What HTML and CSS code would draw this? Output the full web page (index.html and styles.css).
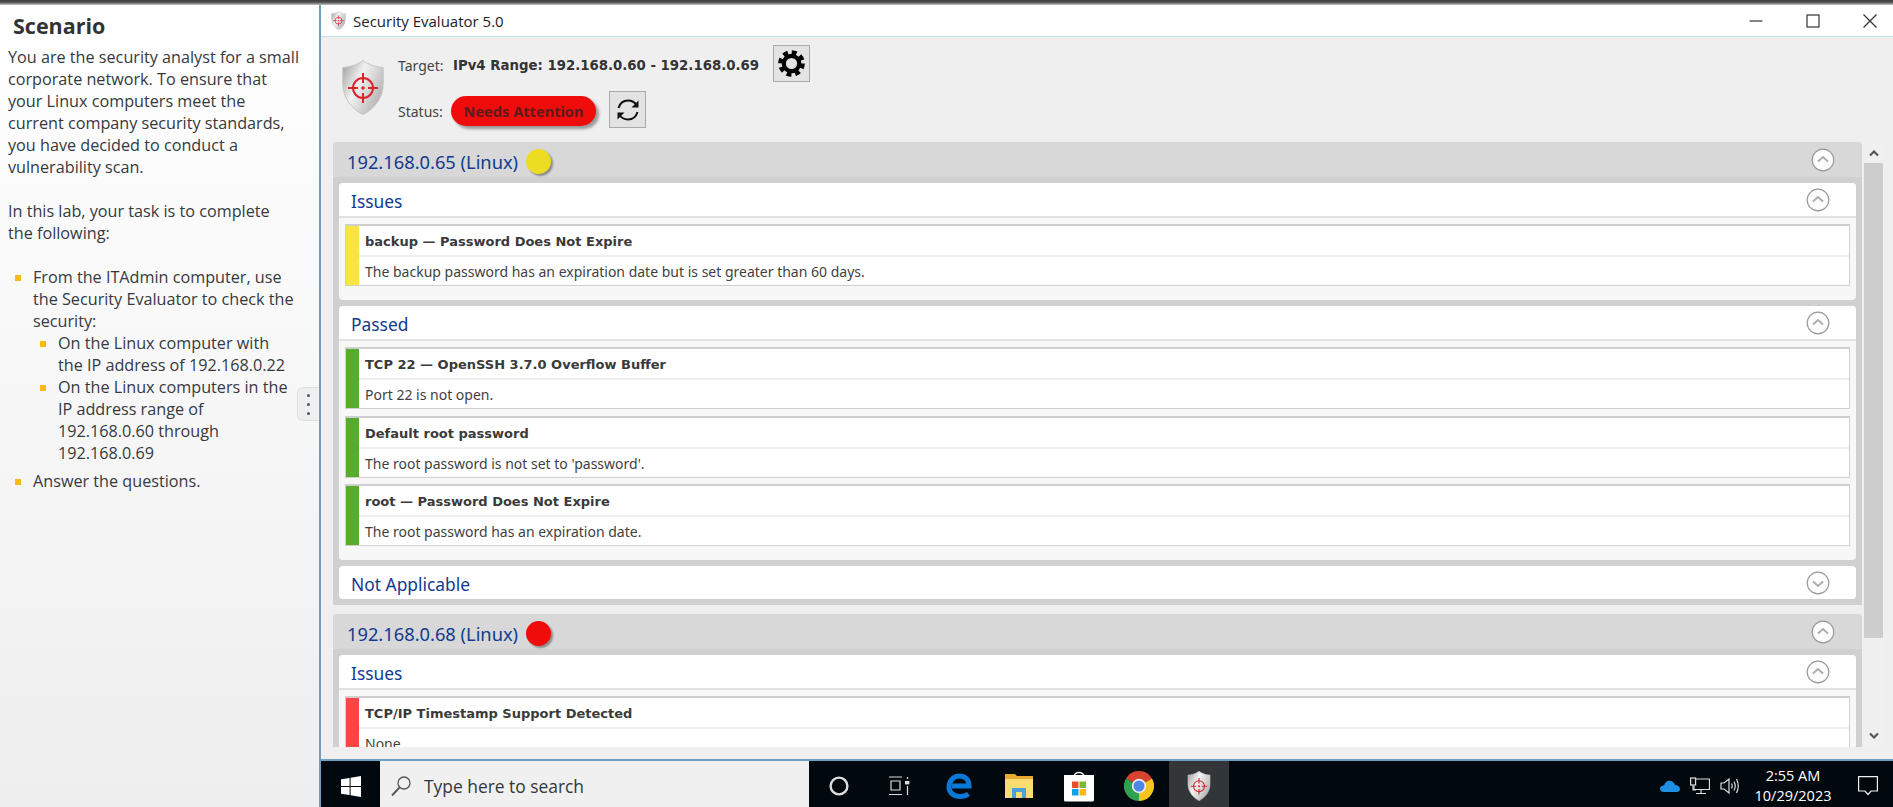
FILE: index.html
```html
<!DOCTYPE html>
<html lang="en">
<head>
<meta charset="utf-8">
<title>Security Evaluator 5.0</title>
<link rel="stylesheet" href="styles.css">
</head>
<body>
<svg class="defs" width="0" height="0" aria-hidden="true">
  <defs>
    <linearGradient id="silver" x1="0" y1="0" x2="1" y2="0.6">
      <stop offset="0" stop-color="#9b9b9b"/>
      <stop offset="0.45" stop-color="#f2f2f2"/>
      <stop offset="1" stop-color="#b5b5b5"/>
    </linearGradient>
    <symbol id="shield" viewBox="0 0 42 55">
      <path d="M21 0.5C15 5 8 7 0.8 7.5V24C0.8 38 10 49 21 54.5C32 49 41.2 38 41.2 24V7.5C34 7 27 5 21 0.5Z" fill="url(#silver)" stroke="#c4c4c4"/>
      <g fill="none" stroke="#d8262c" stroke-width="2">
        <circle cx="21" cy="28" r="10"/>
        <path d="M21 13V23M21 33V43M6 28H16M26 28H36"/>
      </g>
      <circle cx="21" cy="28" r="1.8" fill="#d8262c"/>
    </symbol>
    <symbol id="chev-up" viewBox="0 0 24 24">
      <circle cx="12" cy="12" r="10.8" fill="#fdfdfd" stroke="#9a9a9a" stroke-width="1.2"/>
      <path d="M7 13.5L12 9L17 13.5" fill="none" stroke="#adadad" stroke-width="2"/>
    </symbol>
    <symbol id="chev-down" viewBox="0 0 24 24">
      <circle cx="12" cy="12" r="10.8" fill="#fdfdfd" stroke="#9a9a9a" stroke-width="1.2"/>
      <path d="M7 10.5L12 15L17 10.5" fill="none" stroke="#adadad" stroke-width="2"/>
    </symbol>
  </defs>
</svg>

<div class="topstrip"></div>
<div class="screen">
  <aside class="sidebar">
    <h1 class="scenario-title">Scenario</h1>
    <p class="para">You are the security analyst for a small corporate network. To ensure that your Linux computers meet the current company security standards, you have decided to conduct a vulnerability scan.</p>
    <p class="para">In this lab, your task is to complete<br>the following:</p>
    <ul class="tasks">
      <li>From the ITAdmin computer, use the Security Evaluator to check the security:
        <ul class="subtasks">
          <li>On the Linux computer with<br>the IP address of 192.168.0.22</li>
          <li>On the Linux computers in the<br>IP address range of<br>192.168.0.60 through<br>192.168.0.69</li>
        </ul>
      </li>
      <li>Answer the questions.</li>
    </ul>
    <div class="handle"><span></span><span></span><span></span></div>
  </aside>

  <div class="desktop">
    <main class="window">
      <div class="titlebar">
        <svg class="title-icon"><use href="#shield"/></svg>
        <span class="title-text">Security Evaluator 5.0</span>
        <div class="controls">
          <svg class="ctl" viewBox="0 0 14 14"><path d="M0.5 7H13.5" stroke="#333" stroke-width="1.2" fill="none"/></svg>
          <svg class="ctl" viewBox="0 0 14 14"><rect x="1" y="1" width="12" height="12" fill="none" stroke="#333" stroke-width="1.2"/></svg>
          <svg class="ctl" viewBox="0 0 14 14"><path d="M0.5 0.5L13.5 13.5M13.5 0.5L0.5 13.5" stroke="#333" stroke-width="1.2" fill="none"/></svg>
        </div>
      </div>

      <header class="appbar">
        <svg class="app-shield"><use href="#shield"/></svg>
        <div class="app-rows">
          <div class="app-row">
            <span class="app-label app-label-target">Target:</span>
            <strong class="target">IPv4 Range: 192.168.0.60 - 192.168.0.69</strong>
            <button class="tool gear" type="button" aria-label="Settings">
              <svg viewBox="0 0 30 30" width="29" height="29">
                <circle cx="15" cy="15" r="8" fill="none" stroke="#000" stroke-width="4.4"/>
                <circle cx="15" cy="15" r="11.6" fill="none" stroke="#000" stroke-width="4.4" stroke-dasharray="5.1 4"/>
              </svg>
            </button>
          </div>
          <div class="app-row">
            <span class="app-label app-label-status">Status:</span>
            <span class="pill">Needs Attention</span>
            <button class="tool refresh" type="button" aria-label="Refresh">
              <svg viewBox="0 0 24 24" width="24" height="24" fill="none" stroke="#111" stroke-width="2">
                <path d="M2.5 10C4 5 8 2.5 12 2.5C16 2.5 19 4.5 21 7.5"/>
                <path d="M21.5 14C20 19 16 21.5 12 21.5C8 21.5 5 19.5 3 16.5"/>
                <path d="M22.5 2.5V9.5H15.5Z" fill="#111" stroke="none"/>
                <path d="M1.5 21.5V14.5H8.5Z" fill="#111" stroke="none"/>
              </svg>
            </button>
          </div>
        </div>
      </header>

      <div class="pane">
        <div class="list">
          <section class="group">
            <div class="group-head">
              <span class="host">192.168.0.65 (Linux)</span>
              <span class="dot dot-yellow"></span>
              <svg class="chev"><use href="#chev-up"/></svg>
            </div>
            <div class="group-body">
              <section class="card">
                <div class="card-head"><span>Issues</span><svg class="chev"><use href="#chev-up"/></svg></div>
                <div class="rows">
                  <article class="row">
                    <div class="bar bar-yellow"></div>
                    <div class="row-main">
                      <div class="row-title">backup — Password Does Not Expire</div>
                      <div class="row-desc">The backup password has an expiration date but is set greater than 60 days.</div>
                    </div>
                  </article>
                </div>
              </section>
              <section class="card">
                <div class="card-head"><span>Passed</span><svg class="chev"><use href="#chev-up"/></svg></div>
                <div class="rows">
                  <article class="row">
                    <div class="bar bar-green"></div>
                    <div class="row-main">
                      <div class="row-title">TCP 22 — OpenSSH 3.7.0 Overflow Buffer</div>
                      <div class="row-desc">Port 22 is not open.</div>
                    </div>
                  </article>
                  <article class="row">
                    <div class="bar bar-green"></div>
                    <div class="row-main">
                      <div class="row-title">Default root password</div>
                      <div class="row-desc">The root password is not set to 'password'.</div>
                    </div>
                  </article>
                  <article class="row">
                    <div class="bar bar-green"></div>
                    <div class="row-main">
                      <div class="row-title">root — Password Does Not Expire</div>
                      <div class="row-desc">The root password has an expiration date.</div>
                    </div>
                  </article>
                </div>
              </section>
              <section class="card">
                <div class="card-head card-head-closed"><span>Not Applicable</span><svg class="chev"><use href="#chev-down"/></svg></div>
              </section>
            </div>
          </section>

          <section class="group">
            <div class="group-head">
              <span class="host">192.168.0.68 (Linux)</span>
              <span class="dot dot-red"></span>
              <svg class="chev"><use href="#chev-up"/></svg>
            </div>
            <div class="group-body">
              <section class="card">
                <div class="card-head"><span>Issues</span><svg class="chev"><use href="#chev-up"/></svg></div>
                <div class="rows">
                  <article class="row">
                    <div class="bar bar-red"></div>
                    <div class="row-main">
                      <div class="row-title">TCP/IP Timestamp Support Detected</div>
                      <div class="row-desc">None</div>
                    </div>
                  </article>
                </div>
              </section>
            </div>
          </section>
        </div>

        <div class="scrollbar">
          <svg class="sb-arrow" viewBox="0 0 10 8"><path d="M1 6.5L5 2.5L9 6.5" fill="none" stroke="#555" stroke-width="2.2"/></svg>
          <div class="sb-thumb"></div>
          <div class="sb-rest"></div>
          <svg class="sb-arrow" viewBox="0 0 10 8"><path d="M1 1.5L5 5.5L9 1.5" fill="none" stroke="#555" stroke-width="2.2"/></svg>
        </div>
      </div>
    </main>

    <footer class="taskbar">
      <div class="start">
        <svg viewBox="0 0 20 21" width="20" height="21" fill="#fff">
          <path d="M0 3.2L8.6 2V10H0Z"/><path d="M9.6 1.8L20 0V10H9.6Z"/>
          <path d="M0 11H8.6V19L0 17.8Z"/><path d="M9.6 11H20V21L9.6 19.2Z"/>
        </svg>
      </div>
      <div class="search">
        <svg viewBox="0 0 20 20" width="20" height="20" fill="none" stroke="#555" stroke-width="1.3">
          <circle cx="13" cy="7" r="6"/><path d="M8.6 11.4L1 19.5" stroke-width="2"/>
        </svg>
        <span>Type here to search</span>
      </div>
      <div class="slot">
        <svg viewBox="0 0 20 20" width="20" height="20"><circle cx="10" cy="10" r="8.4" fill="none" stroke="#ddd" stroke-width="2.4"/></svg>
      </div>
      <div class="slot">
        <svg viewBox="0 0 22 20" width="22" height="20" fill="none" stroke="#ddd" stroke-width="1.2">
          <path d="M1 1H14M3 5H12V14H3ZM1 18.5H14M19.5 1V3M19.5 10V19"/>
          <rect x="17" y="5" width="4.4" height="3.4" fill="#ddd" stroke="none"/>
        </svg>
      </div>
      <div class="slot">
        <svg viewBox="0 0 26 26" width="26" height="26" fill="none" stroke="#0a78d7" stroke-width="5">
          <path d="M6 13H23C23 6 18.500 3 13.500 3C7.500 3 3 8 3 14C3 20 8 23.500 14 23.500C17 23.500 20 22.800 22.500 21"/>
        </svg>
      </div>
      <div class="slot">
        <svg viewBox="0 0 30 26" width="30" height="26">
          <path d="M1 1H11L13 3H29V25H1Z" fill="#e8a92f"/>
          <path d="M1 6H29V25H1Z" fill="#fbdc72"/>
          <path d="M8 25V15H22V25H18V19H12V25Z" fill="#4a9fdc"/>
        </svg>
      </div>
      <div class="slot">
        <svg viewBox="0 0 30 32" width="30" height="32">
          <path d="M10 7C10 1 20 1 20 7" fill="none" stroke="#eee" stroke-width="1.6"/>
          <path d="M0 5H30V30Q30 31.500 28.500 31.500H1.500Q0 31.500 0 30Z" fill="#fff"/>
          <rect x="8" y="11.500" width="6.500" height="6.500" fill="#e8502a"/>
          <rect x="15.500" y="11.500" width="6.500" height="6.500" fill="#7db928"/>
          <rect x="8" y="19" width="6.500" height="6.500" fill="#0ba3e6"/>
          <rect x="15.500" y="19" width="6.500" height="6.500" fill="#fdb813"/>
        </svg>
      </div>
      <div class="slot">
        <svg viewBox="0 0 30 30" width="30" height="30">
          <path d="M15 15L2 7.500A15 15 0 0 1 28 7.500Z" fill="#d8432f"/>
          <path d="M15 15L15 30A15 15 0 0 1 2 7.500Z" fill="#2fa24f"/>
          <path d="M15 15L28 7.500A15 15 0 0 1 15 30Z" fill="#f5c51e"/>
          <circle cx="15" cy="15" r="7.200" fill="#eee"/>
          <circle cx="15" cy="15" r="5.500" fill="#4d86e8"/>
        </svg>
      </div>
      <div class="slot slot-active">
        <svg class="task-shield"><use href="#shield"/></svg>
      </div>
      <div class="tray">
        <svg class="tray-cloud" viewBox="0 0 20 12" width="20" height="12">
          <path d="M4 12C1 12 0 10 0 8.500C0 6.500 2 5 4 5.500C5 2 8 0 11 1C13 1.500 14.500 3 15 5C18 5 20 7 20 9C20 11 18.500 12 17 12Z" fill="#1f8fe3"/>
        </svg>
        <svg class="tray-net" viewBox="0 0 20 18" width="20" height="18" fill="none" stroke="#ddd" stroke-width="1.2">
          <path d="M4 2H19.500V12.500H4V9M11 12.500V16.500M6 16.500H16"/>
          <rect x="0.600" y="1" width="5" height="7" fill="#111"/>
          <path d="M3 8V13H6"/>
        </svg>
        <svg class="tray-vol" viewBox="0 0 20 18" width="20" height="18" fill="none" stroke="#ddd" stroke-width="1.2">
          <path d="M1 6H4L9 2V16L4 12H1Z"/>
          <path d="M11.500 6.500Q13 9 11.500 11.500M14 4.500Q16.500 9 14 13.500M16.500 2Q20 9 16.500 16"/>
        </svg>
        <div class="clock"><span>2:55 AM</span><span>10/29/2023</span></div>
        <svg class="tray-note" viewBox="0 0 20 20" width="20" height="20" fill="none" stroke="#eee" stroke-width="1.2">
          <path d="M0.600 0.600H19.400V15H13L10 18.500L7 15H0.600Z"/>
        </svg>
      </div>
    </footer>
  </div>
</div>
</body>
</html>
```

FILE: styles.css
```css
* { box-sizing: border-box; }

html, body {
  margin: 0;
  height: 100%;
  overflow: hidden;
  background: #fff;
}

body {
  width: 1893px;
  height: 807px;
  display: flex;
  flex-direction: column;
  font-family: "Noto Sans", "Open Sans", sans-serif;
}

.defs { position: absolute; }

.topstrip {
  height: 5px;
  flex: none;
  background: linear-gradient(#3a3a3a 0, #5a5a5a 50%, #c8c8c8 100%);
}

.screen {
  flex: 1;
  min-height: 0;
  display: flex;
}

/* Sidebar */
.sidebar {
  position: relative;
  flex: none;
  width: 321px;
  padding: 6px 15px 0 8px;
  background: linear-gradient(#ffffff 0, #f7f7f7 50%, #eeeeee 100%);
  border-right: 2px solid #6f9dbf;
  color: #35393f;
  font: 16.2px/22px "Open Sans", sans-serif;
}

.scenario-title {
  margin: 0 0 5px 5px;
  font: 700 21.5px/30px "Open Sans", sans-serif;
  color: #333;
}

.para { margin: 0 0 22px; }

.tasks {
  margin: 22px 0 0;
  padding: 0 0 0 25px;
  list-style: square;
}

.subtasks {
  margin: 0;
  padding: 0 0 0 25px;
  list-style: square;
}

.tasks li::marker { color: #fbb917; }
.tasks > li + li { margin-top: 6px; }

.handle {
  position: absolute;
  right: 0;
  top: 382px;
  width: 22px;
  height: 34px;
  display: flex;
  flex-direction: column;
  align-items: center;
  justify-content: center;
  gap: 6px;
  background: #efefef;
  border: 1px solid #dedede;
  border-right: 0;
  border-radius: 6px 0 0 6px;
}

.handle span {
  width: 3px;
  height: 3px;
  border-radius: 50%;
  background: #555;
}

/* Right side */
.desktop {
  flex: 1;
  min-width: 0;
  display: flex;
  flex-direction: column;
}

.window {
  flex: 1;
  min-height: 0;
  display: flex;
  flex-direction: column;
  background: #efefef;
}

.titlebar {
  flex: none;
  height: 32px;
  display: flex;
  align-items: center;
  padding-left: 10px;
  background: #fff;
  border-bottom: 1px solid #c3e0e8;
}

.title-icon { width: 15px; height: 19px; }

.title-text {
  margin-left: 7px;
  font: 15px/20px "Open Sans", sans-serif;
  color: #222;
}

.controls {
  margin-left: auto;
  display: flex;
  gap: 43px;
  padding-right: 16px;
}

.ctl { width: 14px; height: 14px; }

.appbar {
  flex: none;
  height: 105px;
  display: flex;
  padding: 8px 0 0 21px;
}

.app-shield {
  width: 42px;
  height: 55px;
  margin-top: 15px;
}

.app-rows {
  margin-left: 14px;
  display: flex;
  flex-direction: column;
  gap: 9px;
}

.app-row {
  height: 37px;
  display: flex;
  align-items: center;
}

.app-label {
  width: 53px;
  font-size: 14px;
  color: #444;
}

.app-label-target { margin-top: 3px; }
.app-label-status { margin-top: 3px; }

.target {
  margin: 3px 0 0 2px;
  font: 700 13.3px "DejaVu Sans", sans-serif;
  color: #333;
}

.tool {
  width: 37px;
  height: 37px;
  padding: 0;
  display: flex;
  align-items: center;
  justify-content: center;
  background: #e3e3e3;
  border: 1px solid #aaa;
}

.gear { margin-left: 14px; }
.refresh { margin-left: 13px; }

.pill {
  width: 145px;
  height: 30px;
  margin-top: 2px;
  border-radius: 15px;
  background: #f10c0c;
  box-shadow: 3px 3px 3px #999;
  color: #5c1b1b;
  font-size: 14.6px;
  font-weight: 700;
  line-height: 30px;
  text-align: center;
}

.pane {
  flex: none;
  height: 605px;
  display: flex;
  padding-left: 12px;
}

.list {
  width: 1529px;
  height: 605px;
  overflow: hidden;
  display: flex;
  flex-direction: column;
  gap: 9px;
}

.group {
  flex: none;
  border-radius: 4px 4px 0 0;
  background: #d0d0d0;
}

.group-head {
  height: 35px;
  display: flex;
  align-items: center;
  padding: 0 27px 0 14px;
  background: #d8d8d8;
  border-radius: 4px 4px 0 0;
}

.host {
  margin-top: 4px;
  font-size: 18.3px;
  color: #123a8f;
}

.dot {
  width: 25px;
  height: 25px;
  margin: 4px 0 0 8px;
  border-radius: 50%;
  box-shadow: 2px 2px 2px #8a8a8a;
}

.dot-yellow { background: #ecdc22; }
.dot-red { background: #f10c0c; }

.chev {
  width: 24px;
  height: 24px;
  margin-left: auto;
  flex: none;
}

.group-body {
  padding: 6px;
  display: flex;
  flex-direction: column;
  gap: 6.5px;
}

.card {
  background: #f7f7f7;
  border-radius: 4px;
  overflow: hidden;
}

.card-head {
  height: 35px;
  display: flex;
  align-items: center;
  padding: 0 26px 0 12px;
  background: #fff;
  border-bottom: 2px solid #e2e2e2;
  font-size: 17.4px;
  color: #123a8f;
}

.card-head span { margin-top: 2px; }

.card-head-closed {
  height: 33px;
  border-bottom: 0;
}

.rows {
  padding: 6px 6px 13.5px;
  display: flex;
  flex-direction: column;
  gap: 6.67px;
}

.row {
  height: 62px;
  display: flex;
  background: #fff;
  border: 1px solid #cfcfcf;
  border-top-width: 2px;
}

.bar { width: 13px; flex: none; }
.bar-yellow { background: #f9e53e; }
.bar-green { background: #56ad2d; }
.bar-red { background: #fb4545; }

.row-main {
  flex: 1;
  min-width: 0;
  display: flex;
  flex-direction: column;
}

.row-title {
  height: 31px;
  padding: 1px 0 0 6px;
  border-bottom: 2px solid #eee;
  font: 700 13px/29px "DejaVu Sans", sans-serif;
  color: #3a3a3a;
}

.row-desc {
  height: 28px;
  padding: 1px 0 0 6px;
  font-size: 14px;
  line-height: 28px;
  color: #3f3f3f;
}

.scrollbar {
  width: 19px;
  height: 605px;
  margin-left: 2px;
  display: flex;
  flex-direction: column;
  align-items: center;
  background: #f0f0f0;
}

.sb-arrow {
  flex: none;
  width: 10px;
  height: 8px;
  margin: 7px 0;
}

.sb-thumb {
  flex: none;
  width: 100%;
  height: 475px;
  margin-top: -1px;
  background: #cdcdcd;
}

.sb-rest { flex: 1; }

/* Taskbar */
.taskbar {
  flex: none;
  height: 48px;
  display: flex;
  align-items: stretch;
  background: #01090f;
  border-top: 2px solid #6f9fc0;
}

.start {
  flex: none;
  width: 59px;
  padding-top: 4px;
  display: flex;
  align-items: center;
  justify-content: center;
}

.search {
  flex: none;
  width: 429px;
  display: flex;
  align-items: center;
  gap: 13px;
  padding: 4px 0 0 11px;
  background: #f0f0f0;
  color: #33373d;
  font: 17.4px "Open Sans", sans-serif;
}

.slot {
  flex: none;
  width: 60px;
  padding-top: 4px;
  display: flex;
  align-items: center;
  justify-content: center;
}

.slot-active { background: #333638; }

.task-shield { width: 24px; height: 30px; }

.tray {
  flex: 1;
  display: flex;
  align-items: center;
  padding: 4px 0 0 431px;
  color: #fff;
}

.tray-net { margin-left: 10px; }
.tray-vol { margin-left: 10px; }

.clock {
  width: 92px;
  margin-left: 7px;
  display: flex;
  flex-direction: column;
  align-items: center;
  font: 14.5px/20px "Open Sans", sans-serif;
}

.tray-note { margin-left: 19px; }
```
